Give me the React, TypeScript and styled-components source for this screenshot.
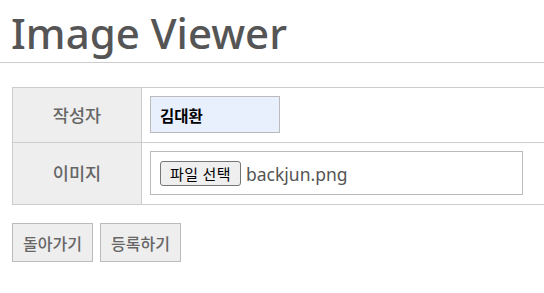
import React from "react";
import styled, { createGlobalStyle } from "styled-components";

const Global = createGlobalStyle`
  html, body { margin: 0; padding: 0; background: #fff; overflow: hidden; }
  body { font-family: "Noto Sans", "Noto Sans CJK KR", sans-serif; }
`;

const Header = styled.header`
  height: 62px;
  border-bottom: 1px solid #cccccc;
  padding-left: 11px;
  display: flex;
  align-items: flex-end;
`;

const Title = styled.h1`
  margin: 0 0 -2px 0;
  font-family: "Noto Sans", sans-serif;
  font-size: 42px;
  font-weight: 500;
  color: #555555;
  line-height: 62px;
`;

const Main = styled.main`
  padding: 24px 0 0 12px;
`;

const Table = styled.div`
  width: 545px;
  display: grid;
  grid-template-columns: 129px 1fr;
  border-top: 1px solid #cccccc;
  border-left: 1px solid #cccccc;
`;

const Label = styled.div<{ $h: number }>`
  height: ${(p) => p.$h}px;
  background: #eeeeee;
  border-right: 1px solid #cccccc;
  border-bottom: 1px solid #cccccc;
  display: flex;
  align-items: center;
  justify-content: center;
  font-family: "Noto Sans CJK KR", sans-serif;
  font-size: 17.5px;
  font-weight: 500;
  color: #666666;
  box-sizing: border-box;
  padding-bottom: 2px;
`;

const Cell = styled.div<{ $h: number }>`
  height: ${(p) => p.$h}px;
  border-bottom: 1px solid #cccccc;
  padding: 8px;
  box-sizing: border-box;
  display: flex;
  align-items: flex-start;
`;

const NameInput = styled.input`
  width: 130px;
  height: 37px;
  box-sizing: border-box;
  border: 1px solid #bbbbbb;
  background: #e8f0fe;
  padding: 0 9px;
  font-family: "Noto Sans CJK KR", sans-serif;
  font-size: 15.5px;
  font-weight: 700;
  color: #000;
  outline: none;
`;

const FileBox = styled.label`
  width: 373px;
  height: 44px;
  box-sizing: border-box;
  border: 1px solid #bbbbbb;
  background: #fff;
  display: flex;
  align-items: center;
  padding-left: 9px;
  gap: 5px;
`;

const FileButton = styled.span`
  height: 25px;
  width: 81px;
  box-sizing: border-box;
  border: 1px solid #767676;
  border-radius: 3px;
  background: #efefef;
  display: flex;
  align-items: center;
  justify-content: center;
  font-family: "Noto Sans CJK KR", sans-serif;
  font-size: 15px;
  color: #000;
  letter-spacing: 0.5px;
`;

const FileName = styled.span`
  font-family: "Noto Sans", sans-serif;
  font-size: 17.5px;
  color: #555555;
  margin-top: 1px;
`;

const Buttons = styled.div`
  display: flex;
  gap: 7px;
  margin-top: 18px;
`;

const Button = styled.button`
  width: 81px;
  height: 39px;
  box-sizing: border-box;
  border: 1px solid #bbbbbb;
  background: #eeeeee;
  font-family: "Noto Sans CJK KR", sans-serif;
  font-size: 16px;
  font-weight: 500;
  color: #666666;
  padding: 0;
  cursor: pointer;
`;

export default function App() {
  return (
    <>
      <Global />
      <Header>
        <Title>Image Viewer</Title>
      </Header>
      <Main>
        <Table>
          <Label $h={55}>작성자</Label>
          <Cell $h={55}>
            <NameInput defaultValue="김대환" />
          </Cell>
          <Label $h={62}>이미지</Label>
          <Cell $h={62}>
            <FileBox>
              <FileButton>파일 선택</FileButton>
              <FileName>backjun.png</FileName>
            </FileBox>
          </Cell>
        </Table>
        <Buttons>
          <Button>돌아가기</Button>
          <Button>등록하기</Button>
        </Buttons>
      </Main>
    </>
  );
}
